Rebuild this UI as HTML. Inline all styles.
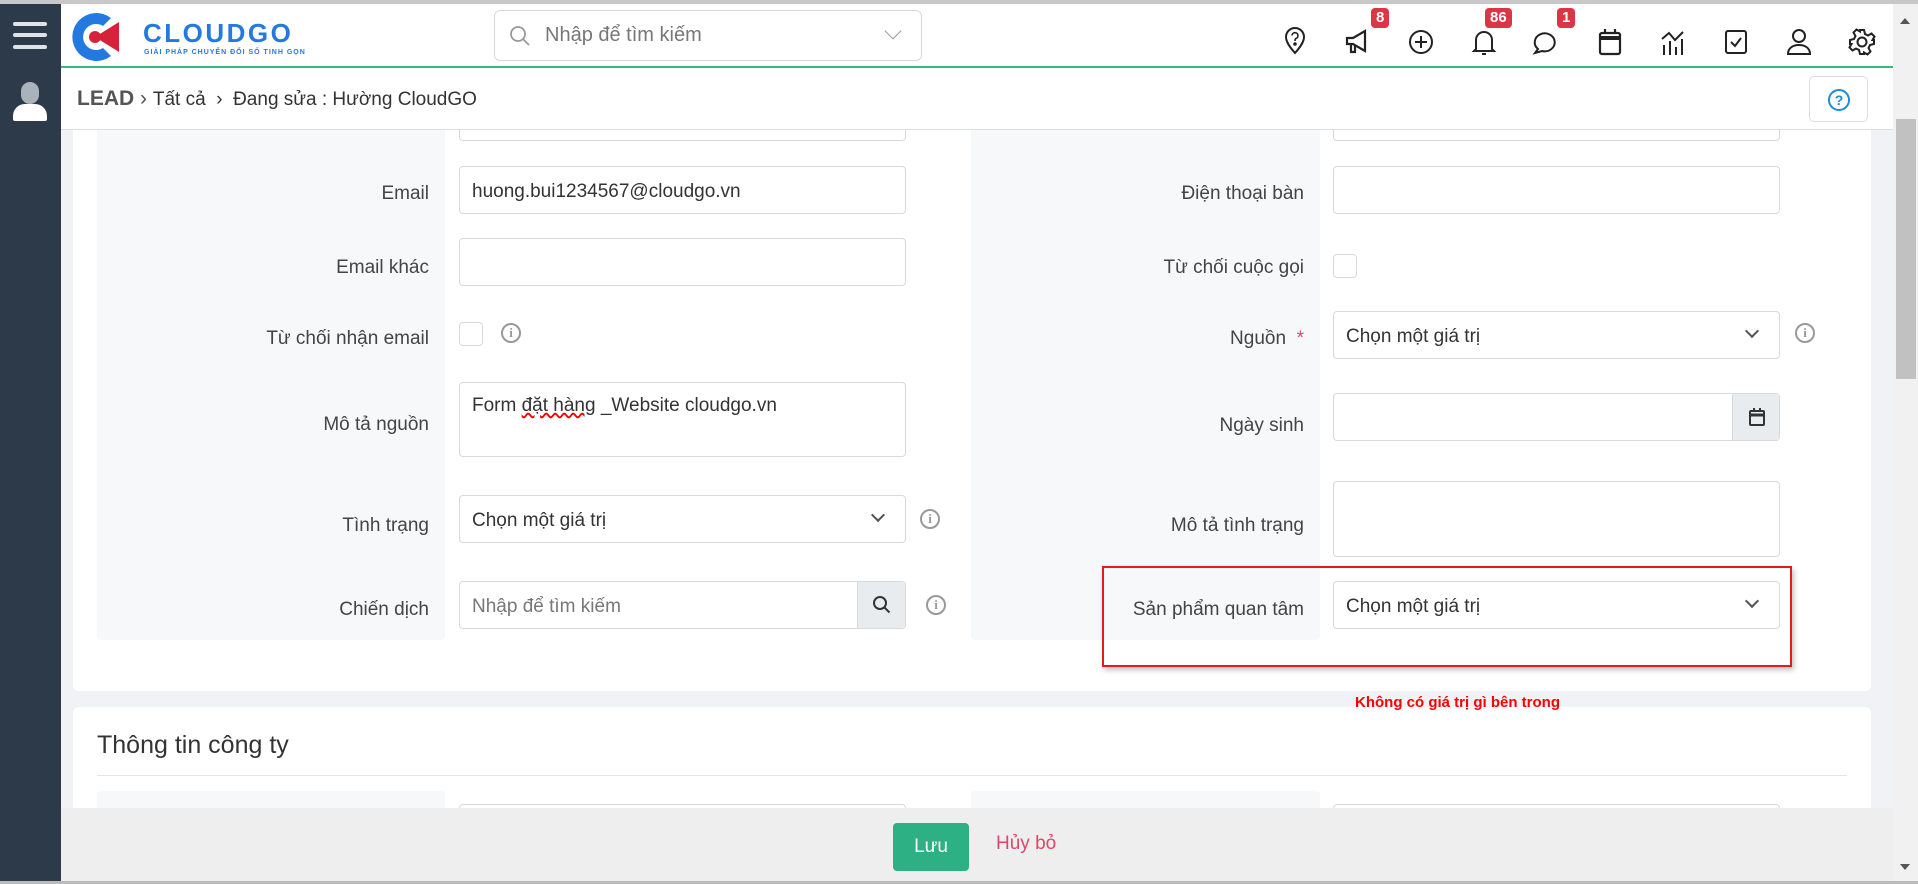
<!DOCTYPE html>
<html style="width:1918px;height:884px;overflow:hidden"><head><meta charset="utf-8"><style>
*{box-sizing:border-box;margin:0;padding:0}
body{width:1918px;height:884px;overflow:hidden;position:relative;background:#f0f2f5;font-family:"Liberation Sans","Noto Sans CJK SC",sans-serif;color:#333;font-size:18px}
.abs{position:absolute}
.topline{left:0;top:0;width:1918px;height:4px;background:#c8c8c8;z-index:20}
.side{left:0;top:4px;width:61px;height:877px;background:#2c3a4a;z-index:20}
.header{left:61px;top:4px;width:1832px;height:64px;background:#fff;border-bottom:2px solid #3cb878;z-index:20}
.bc{left:61px;top:68px;width:1832px;height:62px;background:#fff;border-bottom:1px solid #ddd;z-index:20}
.card{background:#fff;border-radius:6px}
.panel{background:#f7f8fa;border-radius:4px}
.inp{background:#fff;border:1px solid #d9d9d9;border-radius:4px}
.lbl{text-align:right;font-size:19px;color:#444}
.badge{background:#dc3545;color:#fff;font-size:15px;font-weight:bold;border-radius:4px;padding:1px 5px;line-height:18px;z-index:21}
.info{width:20px;height:20px;border:2px solid #999;border-radius:50%;color:#999;font-size:13px;font-weight:bold;text-align:center;line-height:16px;font-family:"Liberation Serif",serif}
.chev{width:10px;height:10px;border-right:2px solid #555;border-bottom:2px solid #555;transform:rotate(45deg)}
.hi{z-index:21}
.txt{font-size:19px;padding:14px 12px 0}
</style></head><body>
<div class="abs topline"></div>
<div class="abs side">
  <div class="abs" style="left:13px;top:18px;width:34px;height:4px;background:#dfe3e8;border-radius:2px"></div>
  <div class="abs" style="left:13px;top:29px;width:34px;height:4px;background:#dfe3e8;border-radius:2px"></div>
  <div class="abs" style="left:13px;top:41px;width:34px;height:4px;background:#dfe3e8;border-radius:2px"></div>
  <div class="abs" style="left:21px;top:78px;width:18px;height:22px;background:#aab2bb;border-radius:9px"></div>
  <div class="abs" style="left:13px;top:100px;width:34px;height:17px;background:#fff;border-radius:12px 12px 2px 2px"></div>
</div>
<div class="abs header">
  <svg class="abs" style="left:6px;top:6px" width="58" height="54" viewBox="0 0 58 54">
    <path d="M44 8 A24 24 0 1 0 44 46 L36 38 A13 13 0 1 1 36 16 Z" fill="#2479e0"/>
    <path d="M28 27 L52 12 L52 42 Z" fill="#d5243a"/>
    <circle cx="28" cy="27" r="6" fill="#d5243a"/>
  </svg>
  <div class="abs" style="left:82px;top:14px;font-size:26px;font-weight:bold;color:#2479e0;letter-spacing:2.5px">CLOUDGO</div>
  <div class="abs" style="left:83px;top:45px;font-size:7px;font-weight:bold;color:#2479e0;letter-spacing:1px">GIẢI PHÁP CHUYỂN ĐỔI SỐ TINH GỌN</div>
  <div class="abs inp" style="left:433px;top:6px;width:428px;height:51px;border-radius:6px">
    <svg class="abs" style="left:14px;top:14px" width="22" height="22" viewBox="0 0 22 22"><circle cx="9" cy="9" r="7" fill="none" stroke="#999" stroke-width="1.8"/><path d="M14 14l6 6" stroke="#999" stroke-width="1.8"/></svg>
    <div class="abs" style="left:50px;top:13px;font-size:20px;color:#777">Nhập để tìm kiếm</div>
    <div class="abs chev" style="left:392px;top:14px;border-color:#999;width:12px;height:12px;border-width:1.5px"></div>
  </div>
</div>
<svg class="abs hi" style="left:1282px;top:27px" width="26" height="28" viewBox="0 0 26 28" fill="none" stroke="#222" stroke-width="2"><path d="M13 26 C5 17 4 13 4 10 a9 9 0 0 1 18 0 c0 3-1 7-9 16z"/><path d="M10 8.5a3 3 0 1 1 4 3c-1 .5-1 1.5-1 2.5" stroke-width="1.6"/><circle cx="13" cy="17" r=".8" fill="#222"/></svg>
<svg class="abs hi" style="left:1344px;top:28px" width="28" height="28" viewBox="0 0 28 28" fill="none" stroke="#222" stroke-width="2.2"><path d="M3 10h6l12-7v20l-12-7H3z"/><path d="M7 16v8h4v-7"/></svg>
<div class="abs badge" style="left:1371px;top:8px">8</div>
<svg class="abs hi" style="left:1407px;top:28px" width="28" height="28" viewBox="0 0 28 28" fill="none" stroke="#222" stroke-width="2"><circle cx="14" cy="14" r="11"/><path d="M14 8v12M8 14h12"/></svg>
<svg class="abs hi" style="left:1470px;top:27px" width="28" height="30" viewBox="0 0 28 30" fill="none" stroke="#222" stroke-width="2"><path d="M6 22V13a8 8 0 0 1 16 0v9l2 2H4z"/><path d="M12 27h4"/></svg>
<div class="abs badge" style="left:1485px;top:8px">86</div>
<svg class="abs hi" style="left:1532px;top:28px" width="28" height="28" viewBox="0 0 28 28" fill="none" stroke="#222" stroke-width="2"><path d="M6 21 A10 9 0 1 1 10 23 L3 25 Z"/></svg>
<div class="abs badge" style="left:1557px;top:8px">1</div>
<svg class="abs hi" style="left:1597px;top:27px" width="26" height="30" viewBox="0 0 26 30" fill="none" stroke="#222" stroke-width="2.2"><rect x="3" y="6" width="20" height="21" rx="2"/><path d="M3 11h20" stroke-width="4"/><path d="M8 2v5M18 2v5"/></svg>
<svg class="abs hi" style="left:1659px;top:27px" width="30" height="30" viewBox="0 0 30 30" fill="none" stroke="#222" stroke-width="2"><path d="M3 12l7-6 6 7 8-8"/><path d="M5 18v10M11 14v14M17 20v8M23 12v16"/></svg>
<svg class="abs hi" style="left:1723px;top:28px" width="26" height="28" viewBox="0 0 26 28" fill="none" stroke="#222" stroke-width="2"><rect x="3" y="3" width="20" height="22" rx="2"/><path d="M8 14l4 4 6-8"/></svg>
<svg class="abs hi" style="left:1785px;top:27px" width="28" height="30" viewBox="0 0 28 30" fill="none" stroke="#222" stroke-width="2"><circle cx="14" cy="9" r="6"/><path d="M3 27c0-6 5-9 11-9s11 3 11 9z"/></svg>
<svg class="abs hi" style="left:1848px;top:28px" width="28" height="28" viewBox="0 0 28 28" fill="none" stroke="#222" stroke-width="2"><path d="M12 2h4l1 4 3 1.5 3.5-2 3 3-2 3.5L26 12v4l-4 1-1.5 3 2 3.5-3 3-3.5-2L16 26h-4l-1-4-3-1.5-3.5 2-3-3 2-3.5L2 16v-4l4-1 1.5-3-2-3.5 3-3 3.5 2z"/><circle cx="14" cy="14" r="4.5"/></svg>

<div class="abs bc">
  <div class="abs" style="left:16px;top:19px;font-size:21px;color:#555"><b style="font-weight:600">LEAD</b> &#8250; <span style="font-size:19px;color:#333">Tất cả &nbsp;&#8250;&nbsp; Đang sửa : Hường CloudGO</span></div>
  <div class="abs" style="left:1748px;top:8px;width:59px;height:46px;border:1px solid #ddd;border-radius:5px">
    <div class="abs" style="left:18px;top:12px;width:22px;height:22px;border:2px solid #1a8ddb;border-radius:50%;color:#1a8ddb;font-size:14px;font-weight:bold;text-align:center;line-height:18px">?</div>
  </div>
</div>

<div class="abs card" style="left:73px;top:110px;width:1798px;height:581px"></div>
<div class="abs panel" style="left:97px;top:110px;width:348px;height:530px"></div>
<div class="abs panel" style="left:971px;top:110px;width:349px;height:530px"></div>
<div class="abs inp" style="left:459px;top:100px;width:447px;height:41px"></div>
<div class="abs inp" style="left:1333px;top:100px;width:447px;height:41px"></div>

<div class="abs lbl" style="left:100px;top:183px;width:329px">Email</div>
<div class="abs inp txt" style="left:459px;top:166px;width:447px;height:48px;color:#333">huong.bui1234567@cloudgo.vn</div>
<div class="abs lbl" style="left:100px;top:257px;width:329px">Email khác</div>
<div class="abs inp" style="left:459px;top:238px;width:447px;height:48px"></div>
<div class="abs lbl" style="left:100px;top:328px;width:329px">Từ chối nhận email</div>
<div class="abs inp" style="left:459px;top:322px;width:24px;height:24px"></div>
<div class="abs info" style="left:501px;top:323px">i</div>
<div class="abs lbl" style="left:100px;top:414px;width:329px">Mô tả nguồn</div>
<div class="abs inp" style="left:459px;top:382px;width:447px;height:75px;font-size:19px;padding:12px 12px">Form <span style="text-decoration:underline wavy #e00">đặt hàng</span> _Website cloudgo.vn</div>
<div class="abs lbl" style="left:100px;top:515px;width:329px">Tình trạng</div>
<div class="abs inp txt" style="left:459px;top:495px;width:447px;height:48px">Chọn một giá trị<div class="abs chev" style="right:22px;top:14px"></div></div>
<div class="abs info" style="left:920px;top:509px">i</div>
<div class="abs lbl" style="left:100px;top:599px;width:329px">Chiến dịch</div>
<div class="abs inp txt" style="left:459px;top:581px;width:447px;height:48px;color:#777">Nhập để tìm kiếm
  <div class="abs" style="right:0;top:0;width:48px;height:46px;background:#e9ecef;border-left:1px solid #d9d9d9;border-radius:0 4px 4px 0">
  <svg class="abs" style="left:14px;top:13px" width="20" height="20" viewBox="0 0 20 20"><circle cx="8" cy="8" r="6" fill="none" stroke="#333" stroke-width="2"/><path d="M12.5 12.5l5 5" stroke="#333" stroke-width="2"/></svg></div>
</div>
<div class="abs info" style="left:926px;top:595px">i</div>

<div class="abs lbl" style="left:980px;top:183px;width:324px">Điện thoại bàn</div>
<div class="abs inp" style="left:1333px;top:166px;width:447px;height:48px"></div>
<div class="abs lbl" style="left:980px;top:257px;width:324px">Từ chối cuộc gọi</div>
<div class="abs inp" style="left:1333px;top:254px;width:24px;height:24px"></div>
<div class="abs lbl" style="left:980px;top:328px;width:324px">Nguồn &nbsp;<span style="color:#e0466a">*</span></div>
<div class="abs inp txt" style="left:1333px;top:311px;width:447px;height:48px">Chọn một giá trị<div class="abs chev" style="right:22px;top:14px"></div></div>
<div class="abs info" style="left:1795px;top:323px">i</div>
<div class="abs lbl" style="left:980px;top:415px;width:324px">Ngày sinh</div>
<div class="abs inp" style="left:1333px;top:393px;width:447px;height:48px">
  <div class="abs" style="right:0;top:0;width:47px;height:46px;background:#e9ecef;border-left:1px solid #d9d9d9">
  <svg class="abs" style="left:15px;top:13px" width="18" height="20" viewBox="0 0 18 20" fill="none" stroke="#333" stroke-width="2"><rect x="2" y="4" width="14" height="14" rx="1"/><path d="M2 8h14" stroke-width="3"/><path d="M6 1v4M12 1v4"/></svg></div>
</div>
<div class="abs lbl" style="left:980px;top:515px;width:324px">Mô tả tình trạng</div>
<div class="abs inp" style="left:1333px;top:481px;width:447px;height:76px"></div>
<div class="abs lbl" style="left:980px;top:599px;width:324px">Sản phẩm quan tâm</div>
<div class="abs inp txt" style="left:1333px;top:581px;width:447px;height:48px">Chọn một giá trị<div class="abs chev" style="right:22px;top:14px"></div></div>
<div class="abs" style="left:1102px;top:566px;width:690px;height:101px;border:2px solid #e31b1b;box-shadow:2px 3px 5px rgba(0,0,0,.25)"></div>

<div class="abs card" style="left:73px;top:707px;width:1798px;height:174px"></div>
<div class="abs" style="left:1355px;top:694px;font-size:15px;font-weight:bold;color:#f00;z-index:5">Không có giá trị gì bên trong</div>
<div class="abs" style="left:97px;top:731px;font-size:25px;color:#333">Thông tin công ty</div>
<div class="abs" style="left:97px;top:775px;width:1750px;height:1px;background:#e6e6e6"></div>
<div class="abs panel" style="left:97px;top:791px;width:348px;height:40px"></div>
<div class="abs panel" style="left:971px;top:791px;width:349px;height:40px"></div>
<div class="abs inp" style="left:459px;top:804px;width:447px;height:40px"></div>
<div class="abs inp" style="left:1333px;top:804px;width:447px;height:40px"></div>

<div class="abs" style="left:61px;top:808px;width:1832px;height:73px;background:#eee;z-index:10"></div>
<div class="abs" style="left:893px;top:823px;width:76px;height:48px;background:#2eb085;border-radius:4px;color:#fff;font-size:19px;text-align:center;line-height:48px;z-index:11">Lưu</div>
<div class="abs" style="left:996px;top:833px;font-size:19px;color:#e0466a;z-index:11">Hủy bỏ</div>
<div class="abs" style="left:0;top:881px;width:1918px;height:3px;background:#bbb;z-index:30"></div>

<div class="abs" style="left:1893px;top:4px;width:25px;height:877px;background:#f1f1f1;z-index:25"></div>
<div class="abs" style="left:1900px;top:18px;width:0;height:0;border-left:5px solid transparent;border-right:5px solid transparent;border-bottom:6px solid #555;z-index:26"></div>
<div class="abs" style="left:1896px;top:119px;width:20px;height:260px;background:#c1c1c1;z-index:26"></div>
<div class="abs" style="left:1900px;top:864px;width:0;height:0;border-left:5px solid transparent;border-right:5px solid transparent;border-top:6px solid #555;z-index:26"></div>
</body></html>
